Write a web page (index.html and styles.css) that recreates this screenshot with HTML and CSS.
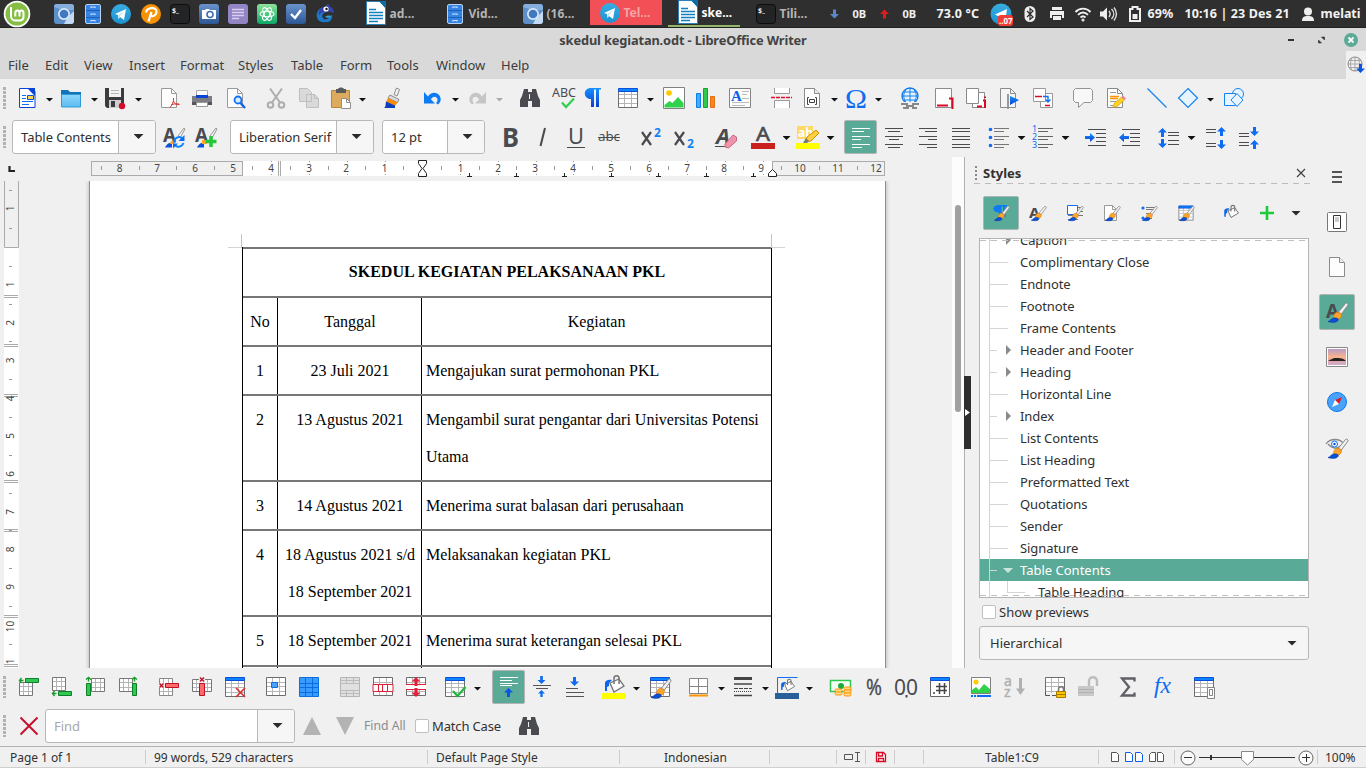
FILE: index.html
```html
<!DOCTYPE html>
<html lang="en">
<head>
<meta charset="utf-8">
<title>skedul kegiatan.odt - LibreOffice Writer</title>
<link rel="stylesheet" href="styles.css">
</head>
<body>
<svg class="paints" aria-hidden="true">
<defs>
<linearGradient id="gb" x1="0" y1="0" x2="0" y2="1"><stop offset="0" stop-color="#1592ff"/><stop offset="1" stop-color="#0a3fd0"/></linearGradient>
<linearGradient id="gf" x1="0" y1="0" x2="0" y2="1"><stop offset="0" stop-color="#8fd6fb"/><stop offset="1" stop-color="#5cbcf2"/></linearGradient>
<linearGradient id="gs" x1="0" y1="0" x2="0" y2="1"><stop offset="0" stop-color="#b79cc8"/><stop offset=".5" stop-color="#f9b48c"/><stop offset=".7" stop-color="#e9a0a0"/><stop offset="1" stop-color="#c8b0d0"/></linearGradient>
<linearGradient id="gt" x1="0" y1="0" x2="0" y2="1"><stop offset="0" stop-color="#38ade2"/><stop offset="1" stop-color="#1c93d1"/></linearGradient>
<linearGradient id="ga" x1="0" y1="0" x2="0" y2="1"><stop offset="0" stop-color="#8fe39a"/><stop offset="1" stop-color="#0ca767"/></linearGradient>
<linearGradient id="gk" x1="0" y1="0" x2="0" y2="1"><stop offset="0" stop-color="#6a93cc"/><stop offset="1" stop-color="#2c5795"/></linearGradient>
</defs>
</svg>
<svg class="symbols" aria-hidden="true">
<!-- shared pieces -->
<symbol id="brush" viewBox="0 0 24 24"><path d="M20.500 3.500L13.500 12l2.500 2.500 7-9.500c.5-1.500-1.500-2.500-2.500-1.500z" fill="#f0f0f0" stroke="#8a8a8a"/><path d="M13 12.500c-3-.5-4 2-4.500 5l5.500 1.500c2-1.500 3-3.500 2-5.500z" fill="#fda62b" stroke="#e08010" stroke-width=".8"/><path d="M3 21.500c2 0 3.500-3.500 6-3.500 3 0 5 .5 4 2.500-1.500 2.500-7.500 2-10 1z" fill="#0a50d8" stroke="#083aa5" stroke-width=".7"/></symbol>
<symbol id="grid" viewBox="0 0 24 24"><path d="M2.500 3.500h19v18h-19z" fill="#fff" stroke="#6d6d70"/><path d="M8.500 4v17M15.500 4v17M3 8.500h18M3 12.500h18M3 17.500h18" stroke="#b5b5b8"/></symbol>
<symbol id="table" viewBox="0 0 24 24"><use href="#grid"/><path d="M2.500 2.500h19v3h-19z" fill="#0d83ff" stroke="#0a50d8"/></symbol>
<symbol id="page" viewBox="0 0 24 24"><path d="M4.500 2.500h10l5 5v14h-15z" fill="#fdfdfd" stroke="#8b8b8b"/><path d="M14.500 2.500v5h5" fill="#eee" stroke="#8b8b8b"/></symbol>
<symbol id="pic" viewBox="0 0 24 24"><path d="M1.500 1.500h21v21h-21z" fill="#fff" stroke="#808080"/><circle cx="7" cy="7" r="2.800" fill="#ffc800"/><path d="M2.500 21.500v-2.500l5-4 3 2 5.500-6 5.500 6v4.500z" fill="#30d24a"/></symbol>
<symbol id="pour" viewBox="0 0 24 24"><path d="M8 9l9-4 5 7-10 6z" fill="#fff" stroke="#737373" stroke-width="1.300"/><path d="M12 10V4c0-3 5-3 5 0v6" fill="none" stroke="#737373" stroke-width="1.500"/><path d="M3 17V9c0-2 3-4 7-3l-3 3v3l-2 1v4z" fill="#0d63ea"/></symbol>
<symbol id="up" viewBox="0 0 9 9"><path d="M4.500 0L9 4.500H6V9H3V4.500H0z"/></symbol>
<symbol id="dn" viewBox="0 0 9 9"><path d="M4.500 9L9 4.500H6V0H3v4.500H0z"/></symbol>
<!-- standard bar -->
<symbol id="new" viewBox="0 0 24 24"><path d="M4.500 2.500H17l3 3v16H4.500z" fill="#fff" stroke="#0a44d6"/><path d="M12 2h8v8z" fill="#0a44d6"/><path d="M7 9.500h4M7 12.500h4M7 15.500h11M7 18.500h7" stroke="#0d70f5"/><path d="M12.500 9.500h6v4h-6z" fill="#ffd34a" stroke="#0a50d8"/></symbol>
<symbol id="folder" viewBox="0 0 24 24"><path d="M2 4h7l2 2h11v6H2z" fill="#1273b8"/><path d="M2.500 8.500h19v12.500h-19z" fill="url(#gf)" stroke="#2e9bd8"/></symbol>
<symbol id="save" viewBox="0 0 24 24"><path d="M2 2h19v20H4l-2-2z" fill="#3b3b3d"/><path d="M6 2h12v9H6z" fill="#f2f2f2"/><path d="M8 4.500h8M8 7.500h8" stroke="#b8b8b8"/><path d="M6 14h12v8H6z" fill="#cfcfcf"/><path d="M8 15h4v6H8z" fill="#3b3b3d"/><circle cx="19" cy="20" r="3.200" fill="#d90a28"/></symbol>
<symbol id="pdf" viewBox="0 0 24 24"><path d="M3.500 2.500h10l5 5v14h-15z" fill="#fdfdfd" stroke="#9a9a9a"/><path d="M13.500 2.500v5h5" fill="none" stroke="#9a9a9a"/><path d="M12 21.500c2-2 4-6 3.500-9.500M15.500 15c1 3 3 4 6 3.500M13 19c2-1 5-1.500 8-1" fill="none" stroke="#e03030"/></symbol>
<symbol id="print" viewBox="0 0 24 24"><path d="M2 10h20v9H2z" fill="#7d7e84"/><path d="M2 16h20v3H2z" fill="#55565c"/><path d="M6.500 4.500h11v6h-11z" fill="#fff" stroke="#aaa"/><path d="M6 9h12v3H6z" fill="#0a44d6"/><path d="M6.500 16.500h11v4h-11z" fill="#fff" stroke="#999"/></symbol>
<symbol id="preview" viewBox="0 0 24 24"><path d="M3.500 2.500h10l5 5v14h-15z" fill="#fdfdfd" stroke="#9a9a9a"/><path d="M13.500 2.500v5h5" fill="none" stroke="#9a9a9a"/><circle cx="14" cy="14" r="3.500" fill="#d8ecff" stroke="#0d70f5" stroke-width="1.800"/><path d="M16.500 17l4.500 5" stroke="#0a60e8" stroke-width="2.200"/></symbol>
<symbol id="cut" viewBox="0 0 24 24"><g fill="none" stroke="#adadad" stroke-width="2"><path d="M6 2.500l10 14M18 2.500l-10 14"/><circle cx="6.500" cy="19" r="2.800"/><circle cx="17.500" cy="19" r="2.800"/></g></symbol>
<symbol id="copy" viewBox="0 0 24 24"><path d="M2.500 2.500h8l4 4v9h-12zM9.500 8.500h8l4 4v9h-12z" fill="#dadada" stroke="#bebebe"/><path d="M17.500 8.500v4h4" fill="none" stroke="#bebebe"/></symbol>
<symbol id="paste" viewBox="0 0 24 24"><path d="M2.500 4.500h18v17h-18z" fill="#dcab5d" stroke="#b98838"/><path d="M7 3h2c1-2 5-2 6 0h2v4H7z" fill="#5a5a5c"/><path d="M12.500 12.500h5l4 4v6h-9z" fill="#fff" stroke="#8f8f8f"/><path d="M17.500 12.500v4h4" fill="none" stroke="#8f8f8f"/></symbol>
<symbol id="clone" viewBox="0 0 24 24"><path d="M16.500 2l3 1.500-2.500 6.500-3-1.500z" fill="#f4f4f4" stroke="#8a8a8a"/><path d="M10 9l9 4.500-1.500 3L8 12z" fill="#dcdcdc" stroke="#8a8a8a"/><path d="M8 12l9.500 4.500-2.500 3.500L6 16z" fill="#ff8c00"/><path d="M6 15.500l9 4v2.500H4c2-1 1.500-4 2-6.500z" fill="#0a3fc0"/></symbol>
<symbol id="undo" viewBox="0 0 24 24"><path d="M4 6v11.500h11L11 13.500c1.500-4 6-3.500 6.500 0 .2 1.500-.5 2.500-1.500 3.500l2 1.500c2.500-2 3.500-5 2-8C17.500 5.500 11 5.500 8 10.500z" fill="#0d7bf5"/></symbol>
<symbol id="redo" viewBox="0 0 24 24"><path d="M21 6v11.500H10l4-4c-1.500-4-6-3.500-6.500 0-.2 1.500.5 2.500 1.500 3.500l-2 1.500c-2.500-2-3.500-5-2-8C7.500 5.500 14 5.500 17 10.500z" fill="#c6c6c6"/></symbol>
<symbol id="find" viewBox="0 0 24 24"><path d="M6 3h4v3h4V3h4l2 7 2 4v7h-8v-6h-4v6H2v-7l2-4z" fill="#4a4b50"/><path d="M11.500 8v5" stroke="#f0f0f0"/></symbol>
<symbol id="abc" viewBox="0 0 24 24"><text x="0" y="10.500" font-size="12.500" textLength="24" lengthAdjust="spacingAndGlyphs" fill="#4a4b50">ABC</text><path d="M10 16.500l4 4.500 8-8.500" fill="none" stroke="#2fd04f" stroke-width="2.200"/></symbol>
<symbol id="pil" viewBox="0 0 24 24"><path d="M20 2v1.500h-2V21h-3V3.500h-2V21h-3v-8C2 13 1.500 2 10 2z" fill="url(#gb)"/></symbol>
<symbol id="chart" viewBox="0 0 24 24"><path d="M2.500 7.500h4v14h-4z" fill="#4aa8ff" stroke="#0a80ec"/><path d="M9.500 2.500h4v19h-4z" fill="#2fc94c" stroke="#18a038"/><path d="M16.500 10.500h4v11h-4z" fill="#ff8420" stroke="#e07014"/></symbol>
<symbol id="textbox" viewBox="0 0 24 24"><path d="M1.500 2.500h21v19h-21z" fill="#fdfdfd" stroke="#858585"/><text x="3" y="14.500" class="serif" font-size="15" font-weight="700" fill="#0a60e8">A</text><path d="M14 5.500h7M14 8.500h5M14 12.500h7M4 16.500h17M4 19.500h13" stroke="#bbb"/></symbol>
<symbol id="pbreak" viewBox="0 0 24 24"><path d="M4.500 2v5.500h15V2M4.500 22v-7.500h15V22" fill="#fff" stroke="#9a9a9a"/><path d="M1 11.500h21" stroke="#e01030" stroke-width="1.300" stroke-dasharray="4 1"/></symbol>
<symbol id="field" viewBox="0 0 24 24"><use href="#page"/><path d="M9 11.500H7.500v7H9M15 11.500h1.500v7H15M9.500 13.500h5v3h-5z" fill="none" stroke="#444"/></symbol>
<symbol id="omega" viewBox="0 0 24 24"><text x="1" y="21.500" font-size="28" class="serif" textLength="22" lengthAdjust="spacingAndGlyphs" fill="#0d6cf2">Ω</text></symbol>
<symbol id="link" viewBox="0 0 24 24"><circle cx="12" cy="10" r="8" fill="#e2f2ff" stroke="#0a78ea" stroke-width="1.300"/><path d="M12 2v16M4 10h16M5.500 6h13M5.500 14h13M8 3.500c-3 4-3 9 0 13M16 3.500c3 4 3 9 0 13" fill="none" stroke="#0a78ea" stroke-width=".9"/><path d="M2 16h20v6H2z" fill="#f0f0f0"/><path d="M3 18h7M14 18h7M8 20h8M5 22h6M14 22h5" stroke="#666" stroke-width="1.600"/></symbol>
<symbol id="foot" viewBox="0 0 24 24"><path d="M3.500 2.500h16v19h-16z" fill="#fdfdfd" stroke="#8b8b8b"/><path d="M5 19.500h11" stroke="#d90a28" stroke-width="2"/><path d="M17 12.500h3.500V23" fill="none" stroke="#d90a28" stroke-width="2"/></symbol>
<symbol id="endn" viewBox="0 0 24 24"><path d="M8.500 6.500h12v15h-12z" fill="#fff" stroke="#8b8b8b"/><path d="M2.500 2.500h12v15h-12z" fill="#fff" stroke="#8b8b8b"/><path d="M13 20.500h5" stroke="#d90a28" stroke-width="2"/><path d="M19 14.500h2V22M21 10.500v1.500" fill="none" stroke="#d90a28" stroke-width="2"/></symbol>
<symbol id="bm" viewBox="0 0 24 24"><path d="M2.500 2.500h10l5 5v14h-15z" fill="#f4f4f4" stroke="#8b8b8b"/><path d="M12.500 2.500v5h5" fill="none" stroke="#8b8b8b"/><path d="M10 8v15" stroke="#999" stroke-width="2"/><path d="M12 10l9 4-9 5z" fill="url(#gb)"/></symbol>
<symbol id="cross" viewBox="0 0 24 24"><path d="M9.500 7.500h12v14h-12z" fill="#fff" stroke="#999"/><path d="M2.500 2.500h12v13h-12z" fill="#fff" stroke="#999"/><path d="M4 10.500h7M14 19.500h5" stroke="#d90a28" stroke-width="1.600"/><path d="M12 10.500h5v5M14.500 13.500l2.500 2.500 2.500-2.500" fill="none" stroke="#0d70f5" stroke-width="1.400"/></symbol>
<symbol id="comment" viewBox="0 0 24 24"><path d="M4.500 2.500h15l2 2v10l-2 2H13L7.500 21.500v-5h-3l-2-2v-10z" fill="#f8f8f8" stroke="#949494"/></symbol>
<symbol id="track" viewBox="0 0 24 24"><path d="M2.500 2.500h10l5 5v14h-15z" fill="#fdfdfd" stroke="#8b8b8b"/><path d="M12.500 2.500v5h5" fill="none" stroke="#8b8b8b"/><path d="M5 6.500h6M5 15.500h6M5 19.500h3" stroke="#999"/><path d="M5 10.500h9M5 12.500h8" stroke="#ff9500" stroke-width="1.300"/><path d="M8 21.500l1-4 7.500-6.500 3 3-7.500 6.500z" fill="#ffd21f" stroke="#c89000" stroke-width=".6"/><path d="M16.500 11l1.500-1.500 3 3-1.500 1.500z" fill="#ee82a0"/></symbol>
<symbol id="line" viewBox="0 0 24 24"><path d="M2.500 2.500l19 19" stroke="#1583f2" stroke-width="1.300"/></symbol>
<symbol id="diamond" viewBox="0 0 24 24"><path d="M12 2.500l9.500 9.500-9.500 9.500L2.500 12z" fill="#e8f4ff" stroke="#1583f2" stroke-width="1.200"/></symbol>
<symbol id="shapes" viewBox="0 0 24 24"><circle cx="16" cy="8" r="5.500" fill="#e8f4ff" stroke="#1583f2"/><path d="M2.500 7.500h11v12h-11z" fill="#e8f4ff" stroke="#1583f2"/><path d="M15 7.500l6 6.500-6 6.500L9 14z" fill="#e8f4ff" stroke="#1583f2"/></symbol>
<!-- formatting bar -->
<symbol id="upd" viewBox="0 0 24 24"><text x="1" y="16.500" font-size="19" font-weight="700" textLength="13" lengthAdjust="spacingAndGlyphs" fill="#4a4b50">A</text><path d="M22 3l-6 8 2 2 5-9z" fill="#f5f5f5" stroke="#999"/><path d="M3 22.500c1-2 3-5 7-5v5z" fill="#0a50d8"/><path d="M9 16h3v3H8z" fill="#fda62b"/><path d="M20.500 14c-3-4-9-1-8 4M13 20c2 3 7 2 8.500-2" fill="none" stroke="#0d83ff" stroke-width="2"/><path d="M22.500 10v6h-6zM11 23.500v-5h5z" fill="#0a6cf0"/></symbol>
<symbol id="addst" viewBox="0 0 24 24"><text x="1" y="16.500" font-size="19" font-weight="700" textLength="13" lengthAdjust="spacingAndGlyphs" fill="#4a4b50">A</text><path d="M22 3l-6 8 2 2 5-9z" fill="#f5f5f5" stroke="#999"/><path d="M3 22.500c1-2 3-5 7-5v5z" fill="#0a50d8"/><path d="M8 15h5v4H8z" fill="#fda62b"/><path d="M17 11v11M11.500 16.500h11" stroke="#22c838" stroke-width="3.500"/></symbol>
<symbol id="bold" viewBox="0 0 24 24"><text x="4" y="21.500" font-size="26" font-weight="700" textLength="17" lengthAdjust="spacingAndGlyphs" fill="#4a4b50">B</text></symbol>
<symbol id="ital" viewBox="0 0 24 24"><path d="M15 3L10.500 21" stroke="#4a4b50" stroke-width="2"/></symbol>
<symbol id="und" viewBox="0 0 24 24"><text x="4" y="18.500" font-size="22" textLength="16" lengthAdjust="spacingAndGlyphs" fill="#4a4b50">U</text><path d="M3 22.500h18" stroke="#4a4b50"/></symbol>
<symbol id="strike" viewBox="0 0 24 24"><text x="1" y="16" font-size="13" textLength="22" lengthAdjust="spacingAndGlyphs" fill="#4a4b50">abc</text><path d="M1 12.500h22" stroke="#4a4b50"/></symbol>
<symbol id="sup" viewBox="0 0 24 24"><path d="M3 7l9 13M12 7l-9 13" stroke="#4a4b50" stroke-width="2.200"/><text x="15" y="11.500" font-size="12" font-weight="700" fill="#1080f8">2</text></symbol>
<symbol id="sub" viewBox="0 0 24 24"><path d="M3 7l9 13M12 7l-9 13" stroke="#4a4b50" stroke-width="2.200"/><text x="15" y="22.500" font-size="12" font-weight="700" fill="#1080f8">2</text></symbol>
<symbol id="clear" viewBox="0 0 24 24"><text x="2" y="19" font-size="22" font-weight="700" font-style="italic" textLength="14" lengthAdjust="spacingAndGlyphs" fill="#4a4b50">A</text><path d="M1 21.500h10" stroke="#4a4b50"/><path d="M11 19l8-9 3.500 2v4l-8 7-3.500-1z" fill="#f292aa" stroke="#c56a80"/></symbol>
<symbol id="fcol" viewBox="0 0 24 24"><text x="5" y="16" font-size="20" textLength="14" lengthAdjust="spacingAndGlyphs" fill="#4a4b50" stroke="#4a4b50" stroke-width=".6">A</text><path d="M0 18h24v6H0z" fill="#c9211e"/></symbol>
<symbol id="hcol" viewBox="0 0 24 24"><path d="M1 1h16v13H1z" fill="#ffd966"/><text x="2" y="11.500" font-size="12" font-weight="700" fill="#fff">ab</text><path d="M9 17l2-5 9-7 3 3-8 8z" fill="#ffcd40" stroke="#c99300"/><path d="M7 18l3-5 3 3-2 2z" fill="#7a7a72"/><path d="M0 18h24v6H0z" fill="#ff0"/></symbol>
<symbol id="al" viewBox="0 0 24 24"><path d="M3 3.500h18M3 6.500h12M3 11.500h18M3 14.500h9M3 19.500h18M3 22.500h10"/></symbol>
<symbol id="ac" viewBox="0 0 24 24"><path d="M3 3.500h18M6 6.500h12M3 11.500h18M7 14.500h10M3 19.500h18M6 22.500h12"/></symbol>
<symbol id="ar" viewBox="0 0 24 24"><path d="M3 3.500h18M9 6.500h12M3 11.500h18M12 14.500h9M3 19.500h18M11 22.500h10"/></symbol>
<symbol id="aj" viewBox="0 0 24 24"><path d="M3 3.500h18M3 6.500h18M3 11.500h18M3 14.500h18M3 19.500h18M3 22.500h18"/></symbol>
<symbol id="bul" viewBox="0 0 24 24"><g stroke="none" fill="#0d6cf2"><circle cx="3.500" cy="4.500" r="1.800"/><circle cx="3.500" cy="12.500" r="1.800"/><circle cx="3.500" cy="20.500" r="1.800"/></g><path stroke="#777" d="M7 3.500h15M7 6.500h10M7 11.500h15M7 14.500h10M7 19.500h15M7 22.500h10"/></symbol>
<symbol id="num" viewBox="0 0 24 24"><g stroke="none" fill="#0d6cf2" font-size="9"><text x="1" y="7">1</text><text x="1" y="15">2</text><text x="1" y="23">3</text></g><path stroke="#666" d="M7 3.500h15M7 6.500h10M7 11.500h15M7 14.500h10M7 19.500h15M7 22.500h10"/></symbol>
<symbol id="ind" viewBox="0 0 24 24"><path d="M4 4.500h18M12 8.500h10M12 12.500h10M12 16.500h10M4 20.500h18"/><path stroke="none" fill="url(#gb)" d="M1 11h5V8l5 4.500L6 17v-3H1z"/></symbol>
<symbol id="outd" viewBox="0 0 24 24"><path d="M4 4.500h18M12 8.500h10M12 12.500h10M12 16.500h10M4 20.500h18"/><path stroke="none" fill="url(#gb)" d="M11 11H6V8l-5 4.500L6 17v-3h5z"/></symbol>
<symbol id="lsp" viewBox="0 0 24 24"><g stroke="none" fill="#0d6cf2"><use href="#up" x="1" y="3" width="9" height="9"/><use href="#dn" x="1" y="14" width="9" height="9"/></g><path d="M11 7.500h11M11 10.500h11M11 15.500h11M11 19.500h11"/></symbol>
<symbol id="psi" viewBox="0 0 24 24"><path d="M2 4.500h10M2 7.500h10M2 18.500h10M2 21.500h10"/><g stroke="none" fill="#0d6cf2"><use href="#up" x="13" y="2" width="9" height="9"/><use href="#dn" x="13" y="15" width="9" height="9"/></g></symbol>
<symbol id="psd" viewBox="0 0 24 24"><path d="M2 8.500h10M2 11.500h10M2 17.500h10M2 20.500h10"/><g stroke="none" fill="#0d6cf2"><use href="#dn" x="13" y="2" width="9" height="9"/><use href="#up" x="13" y="15" width="9" height="9"/></g></symbol>
<!-- table bar -->
<symbol id="g3" viewBox="0 0 14 14"><path d="M.5.500h13v13H.5z" fill="#fff" stroke="#777"/><path d="M4.500 1v12M9.500 1v12M1 4.500h12M1 9.500h12" stroke="#b5b5b8"/></symbol>
<symbol id="rowa" viewBox="0 0 24 24"><use href="#g3" x="2" y="7" width="14" height="14"/><path d="M8.500 3.500h13v4h-13z" fill="#30c850" stroke="#0c8028"/><path d="M6.500 5.500h-4M4.500 3l-2 2.500 2 2.500" fill="none" stroke="#1a9a30" stroke-width="1.400"/></symbol>
<symbol id="rowb" viewBox="0 0 24 24"><use href="#g3" x="2" y="2" width="14" height="14"/><path d="M8.500 16.500h13v4h-13z" fill="#30c850" stroke="#0c8028"/><path d="M6.500 18.500h-4M4.500 16l-2 2.500 2 2.500" fill="none" stroke="#1a9a30" stroke-width="1.400"/></symbol>
<symbol id="coll" viewBox="0 0 24 24"><use href="#g3" x="8" y="3" width="14" height="14"/><path d="M3.500 8.500h4v12h-4z" fill="#30c850" stroke="#0c8028"/><path d="M5.500 6.500v-4M3 4.500l2.500-2 2.500 2" fill="none" stroke="#1a9a30" stroke-width="1.400"/></symbol>
<symbol id="colr" viewBox="0 0 24 24"><use href="#g3" x="3" y="3" width="14" height="14"/><path d="M16.500 8.500h4v12h-4z" fill="#30c850" stroke="#0c8028"/><path d="M18.500 6.500v-4M16 4.500l2.500-2 2.500 2" fill="none" stroke="#1a9a30" stroke-width="1.400"/></symbol>
<symbol id="delr" viewBox="0 0 24 24"><path d="M2.500 3.500h13v17h-13z" fill="#fff" stroke="#888"/><path d="M6.500 4v16M11.500 4v16M3 8.500h12M3 12.500h12M3 16.500h12" stroke="#b5b5b8"/><path d="M2 8h7v5H2z" fill="#f0f0f0"/><path d="M8.500 8.500h13v4h-13z" fill="#ff6a6a" stroke="#c01024"/><path d="M2.500 8.500l4 4m0-4l-4 4" stroke="#c01024" stroke-width="1.500"/></symbol>
<symbol id="delc" viewBox="0 0 24 24"><path d="M2.500 4.500h19v12h-19z" fill="#fff" stroke="#777"/><path d="M3 8.500h18M3 12.500h18M6.500 5v11M17.500 5v11" stroke="#b5b5b8"/><path d="M9 1h6v7H9z" fill="#f0f0f0"/><path d="M9.500 8.500h5v12h-5z" fill="#ff6a6a" stroke="#c01024"/><path d="M10 2.500l4 4m0-4l-4 4" stroke="#c01024" stroke-width="1.500"/></symbol>
<symbol id="delt" viewBox="0 0 24 24"><use href="#table"/><path d="M13 13l9 9m0-9l-9 9" stroke="#e23030" stroke-width="1.700"/></symbol>
<symbol id="selc" viewBox="0 0 24 24"><use href="#grid" y="-1"/><path d="M7.500 7.500h6v5h-6z" fill="#4aa4ff" stroke="#0a70e0"/></symbol>
<symbol id="selt" viewBox="0 0 24 24"><path d="M2.500 2.500h19v19h-19z" fill="#3a9bff" stroke="#0a70e0"/><path d="M8.500 3v18M15.500 3v18M3 8.500h18M3 12.500h18M3 17.500h18" stroke="#0a6ce0"/></symbol>
<symbol id="merge" viewBox="0 0 24 24"><path d="M2.500 2.500h19v19h-19z" fill="#e0e0e0" stroke="#b5b5b5"/><path d="M8.500 3v5M15.500 3v5M3 8.500h18M3 5.500h18M3 15.500h18M3 18.500h18M8.500 16v5M15.500 16v5" stroke="#bbb"/></symbol>
<symbol id="split" viewBox="0 0 24 24"><use href="#grid" y="-1"/><path d="M2 9.500h20v7H2zM7.500 10v7M11.500 10v7M16.500 10v7" fill="#fff" stroke="#e02038"/></symbol>
<symbol id="splt" viewBox="0 0 24 24"><use href="#grid" y="-1"/><path d="M2 10h20v4H2z" fill="#fff"/><path d="M2 9.500h20M2 14.500h20" stroke="#e02038"/><g fill="#e02038"><use href="#up" x="7.500" y="2" width="9" height="9"/><use href="#dn" x="7.500" y="13" width="9" height="9"/></g></symbol>
<symbol id="opt" viewBox="0 0 24 24"><use href="#table"/><path d="M10 16l4.500 5 8-9" fill="none" stroke="#28b840" stroke-width="2.400"/></symbol>
<symbol id="vt" viewBox="0 0 24 24"><path d="M3 2.500h18M3 5.500h12M3 8.500h18M3 10.500h12" stroke="#fff"/><use href="#up" x="7" y="13" width="9" height="9" fill="#0a55e8"/></symbol>
<symbol id="vc" viewBox="0 0 24 24"><path d="M3 10.500h18M6 13.500h12" stroke="#555"/><g fill="#0d6cf2"><use href="#dn" x="7" y="1" width="9" height="8"/><use href="#up" x="7" y="15" width="9" height="7"/></g></symbol>
<symbol id="vb" viewBox="0 0 24 24"><path d="M3 13.500h12M3 17.500h18M3 21.500h18" stroke="#555"/><use href="#dn" x="7" y="2" width="9" height="9" fill="#0d6cf2"/></symbol>
<symbol id="bg" viewBox="0 0 24 24"><use href="#pour" y="-1"/><path d="M0 18h24v6H0z" fill="#ff0"/></symbol>
<symbol id="auto" viewBox="0 0 24 24"><use href="#table"/><use href="#brush" y="1"/></symbol>
<symbol id="brd" viewBox="0 0 24 24"><path d="M3.500 3.500h18v15h-18zM12.500 3v15M3 11.500h18" fill="#fff" stroke="#858585"/><path d="M3 20.500h19" stroke="#ff9500" stroke-width="2"/></symbol>
<symbol id="lst" viewBox="0 0 24 24"><path d="M3 3.500h18" stroke="#444" stroke-width="3"/><path d="M3 9h18M3 20.500h18" stroke="#444" stroke-width="1.600"/><path d="M3 13.500h18" stroke="#444" stroke-dasharray="4 1"/><path d="M3 16.500h18" stroke="#444" stroke-dasharray="1 1"/></symbol>
<symbol id="lcol" viewBox="0 0 24 24"><path d="M2.500 18V2.500h20" fill="none" stroke="#0d70f5"/><use href="#pour" x="3" y="3" width="19" height="17"/><path d="M0 18h24v6H0z" fill="#2a6099"/></symbol>
<symbol id="cur" viewBox="0 0 24 24"><path d="M1.500 5.500h20v11h-20z" fill="#f4fff4" stroke="#30c850" stroke-width="1.500"/><circle cx="12" cy="11" r="3" fill="#20a838"/><g fill="#ffd98a" stroke="#ff9500"><rect x="6" y="14" width="7" height="3" rx="1.500"/><rect x="6" y="17" width="7" height="3" rx="1.500"/><rect x="15" y="12" width="7" height="3" rx="1.500"/><rect x="15" y="15" width="7" height="3" rx="1.500"/><rect x="15" y="18" width="7" height="3" rx="1.500"/></g></symbol>
<symbol id="pct" viewBox="0 0 24 24"><text x="4" y="20" font-size="22" textLength="16" lengthAdjust="spacingAndGlyphs" fill="#4a4b50" stroke="#4a4b50" stroke-width=".3">%</text></symbol>
<symbol id="dec" viewBox="0 0 24 24"><text x="0" y="19.500" font-size="21" textLength="24" lengthAdjust="spacingAndGlyphs" fill="#4a4b50">00</text><path d="M12.500 20v2.500" stroke="#4a4b50" stroke-width="2"/></symbol>
<symbol id="nfm" viewBox="0 0 24 24"><path d="M2.500 5.500h19v16h-19z" fill="#fff" stroke="#666"/><path d="M2.500 2.500h19v3h-19z" fill="#0d83ff" stroke="#0a50d8"/><path d="M8 11.500h11M8 15.500h11M11.500 8v11M16.500 8v11M5 18h2" stroke="#444" stroke-width="1.500"/></symbol>
<symbol id="cap" viewBox="0 0 24 24"><path d="M2.500 2.500h19v16h-19z" fill="#fff" stroke="#808080"/><circle cx="7" cy="7" r="2.500" fill="#ffc800"/><path d="M3 18v-3l4-3 3 3 5-6 6 5v4z" fill="#30d24a"/><path d="M2 21h2M5 21h2M8 21h14" stroke="#0d6cf2" stroke-width="2"/></symbol>
<symbol id="sort" viewBox="0 0 24 24"><g fill="#b0b0b0" font-size="14" stroke="#b0b0b0" stroke-width=".4"><text x="2" y="11">a</text><text x="2" y="21.500">z</text></g><path d="M18.500 3v12" stroke="#b0b0b0" stroke-width="3"/><path d="M14 13.500h9L18.500 20z" fill="#b0b0b0"/></symbol>
<symbol id="prot" viewBox="0 0 24 24"><use href="#grid" y="-1"/><path d="M2 18h11v4H2z" fill="#f0f0f0"/><path d="M2.500 17v3.500H7m2 0h4" fill="none" stroke="#555"/><path d="M15.500 16v-2c0-3 5-3 5 0v2" fill="none" stroke="#777" stroke-width="1.500"/><path d="M13.500 16.500h9v6h-9z" fill="#ffc400" stroke="#a67c00"/><path d="M14 19.500h8" stroke="#a67c00"/></symbol>
<symbol id="unpr" viewBox="0 0 24 24"><path d="M13 11V6c0-5 8-5 8 0v5" fill="none" stroke="#bcbcbc" stroke-width="2.400"/><path d="M2 11h16v10H2z" fill="#c8c8c8"/><path d="M2 14.500h16M2 17.500h16" stroke="#b0b0b0"/></symbol>
<symbol id="sum" viewBox="0 0 24 24"><path d="M18.500 6.500V3.500H6L13 12l-7 8.500h12.500v-3" fill="none" stroke="#5f6065" stroke-width="2.300"/></symbol>
<symbol id="fx" viewBox="0 0 24 24"><text x="4" y="18" class="serif" font-style="italic" font-size="24" textLength="17" lengthAdjust="spacingAndGlyphs" fill="#0d6cf2">fx</text></symbol>
<symbol id="tprop" viewBox="0 0 24 24"><use href="#table"/><path d="M15.500 12.500h7v11h-7zM17.500 14.500h3v6h-3z" fill="#fff" stroke="#858585"/></symbol>
<!-- small -->
<symbol id="s-frame" viewBox="0 0 18 18"><path d="M8 3.500h9M8 7.500h9M2 11.500h15M2 15.500h10" stroke="#777"/><path d="M1.500 1.500h10v9h-10z" fill="#fff" stroke="#0d70f5"/></symbol>
<symbol id="tg" viewBox="0 0 20 20"><circle cx="10" cy="10" r="10" fill="url(#gt)"/><path d="M4 10l11-5-2 11-4-3-1.500 2-.5-4z" fill="#fff"/><path d="M7.500 11L13 7l-4 5-1.500 3z" fill="#bfe0f2"/></symbol>
<symbol id="cab" viewBox="0 0 20 20"><rect x="2.500" y=".5" width="15" height="19" rx="1.500" fill="#3584e4" stroke="#b8d2f2"/><path d="M3 6.500h14M3 13.500h14" stroke="#1b5fb8"/><path d="M8 4V3h4v1M8 11v-1h4v1M8 17.500v-1h4v1" fill="none" stroke="#cfe2fb" stroke-width="1.200"/></symbol>
<symbol id="chro" viewBox="0 0 20 20"><rect width="20" height="20" rx="3" fill="#5d8fc9"/><path d="M0 3c0-2 1-3 3-3h14c2 0 3 1 3 3v3H9z" fill="#86aedd"/><path d="M12 16l4-5 4-4v10c0 2-1 3-3 3h-7z" fill="#c4daf2"/><circle cx="10" cy="10" r="6" fill="#d9e8f8"/><circle cx="10" cy="10" r="4.300" fill="#4079bf"/></symbol>
<symbol id="term" viewBox="0 0 20 20"><rect x=".5" y=".5" width="19" height="19" rx="3" fill="#232425" stroke="#0c0c0c"/><text x="2" y="8.500" font-size="7" font-weight="700" fill="#eee">$_</text></symbol>
<symbol id="odt" viewBox="0 0 20 24"><path d="M.5.500h13l6 6v17H.5z" fill="#fff" stroke="#2a7fb8"/><path d="M13 0h7v8z" fill="#0d6da8"/><path d="M3 8.500h7M3 11.500h14M3 14.500h14M3 17.500h14M3 20.500h9" stroke="#1180c0" stroke-width="1.400"/></symbol>
</svg>

<header class="panel">
  <svg class="mint" viewBox="0 0 28 28"><circle cx="14" cy="14" r="13.300" fill="#fff"/><circle cx="14" cy="14" r="11.500" fill="#86be43"/><path d="M8 7v9c0 3 2 4.500 4 4.500h4.500c2.500 0 4-1.500 4-4v-3.500c0-3.500-4-3.500-4 0v3.500m0-3.500c0-3.500-4.200-3.500-4.200 0v3.500" fill="none" stroke="#fff" stroke-width="2"/></svg>
  <svg class="app"><use href="#chro"/></svg>
  <svg class="app"><use href="#cab"/></svg>
  <svg class="app"><use href="#tg"/></svg>
  <svg class="app" viewBox="0 0 20 20"><circle cx="10" cy="10" r="10" fill="#f69204"/><path d="M7.500 17.500L10.500 8" stroke="#fff" stroke-width="2.400"/><path d="M5 8.500C6 3 16 2.500 15.500 8c-.3 4-5 5-6.500 3.500" fill="none" stroke="#fff" stroke-width="2.200"/></svg>
  <svg class="app"><use href="#term"/></svg>
  <svg class="app" viewBox="0 0 20 20"><rect width="20" height="20" rx="3" fill="url(#gk)"/><path d="M3 6h3l1-1h3l1 1h6v9H3z" fill="#fff"/><circle cx="11" cy="10.500" r="3" fill="#fff" stroke="#3a68a8" stroke-width="1.500"/></svg>
  <svg class="app" viewBox="0 0 20 20"><rect width="20" height="20" rx="3" fill="#9385c4"/><path d="M4 5.500h12M4 8.500h12M4 11.500h12M4 14.500h7" stroke="#d8d0ee" stroke-width="1.300"/></svg>
  <svg class="app" viewBox="0 0 20 20"><rect width="20" height="20" rx="3" fill="url(#ga)"/><g fill="none" stroke="#fff" stroke-width="1.100"><ellipse cx="10" cy="10" rx="7" ry="2.800"/><ellipse cx="10" cy="10" rx="7" ry="2.800" transform="rotate(60 10 10)"/><ellipse cx="10" cy="10" rx="7" ry="2.800" transform="rotate(120 10 10)"/></g></svg>
  <svg class="app" viewBox="0 0 20 20"><rect width="20" height="20" rx="3" fill="url(#gk)"/><path d="M5 10l4 4 6-8" fill="none" stroke="#fff" stroke-width="2.400"/></svg>
  <svg class="app" viewBox="0 0 20 20"><path d="M6 4l4-1 3-3 2 3c3 1 4 4 3 6-1-2-4-2-7-1-4 1-5 5-2 7 3 1 6-1 5-3l3-1c1 5-3 8-7 7C2 20-2 9 6 4z" fill="#1c78c8"/><path d="M6 4l4-1 3-3 2 3c3 1 4 4 3 6-2-2-5-2-8-1-3 0-5 1-6 4-1-3 0-6 2-8z" fill="#3a3fae"/><path d="M10 13c2-2 5-2 6 0l-3 1z" fill="#2aa6d8"/><circle cx="11" cy="5" r="2.600" fill="#fff"/><circle cx="11.500" cy="5" r="1.200" fill="#111"/></svg>
  <div class="task"><svg class="doc"><use href="#odt"/></svg>ad...</div>
  <div class="task"><svg class="app"><use href="#cab"/></svg>Vid...</div>
  <div class="task"><svg class="app"><use href="#chro"/></svg>(16...</div>
  <div class="task alert"><svg class="app"><use href="#tg"/></svg>Tel...</div>
  <div class="task active"><svg class="doc"><use href="#odt"/></svg>ske...</div>
  <div class="task"><svg class="app"><use href="#term"/></svg>Tili...</div>
  <svg class="net"><use href="#dn" fill="#5b86c8"/></svg><span class="small">0B</span>
  <svg class="net"><use href="#up" fill="#e01b1b"/></svg><span class="small">0B</span>
  <span class="temp">73.0 °C</span>
  <svg class="tray" viewBox="0 0 24 24"><circle cx="11" cy="12" r="10.500" fill="url(#gt)"/><path d="M5 12.500l12-5.500-1 7H8z" fill="#fff"/><rect x="8" y="13" width="15" height="11" rx="3" fill="#f23c34"/><text x="9" y="21.500" font-size="8" fill="#fff">..07</text></svg>
  <svg class="tray" viewBox="0 0 24 24"><rect x="6.500" y="4" width="11" height="16" rx="5.500" fill="#eee"/><path d="M9 9l6 6-3 2.500v-11l3 2.500-6 6" fill="none" stroke="#2f2f2f" stroke-width="1.200"/></svg>
  <svg class="tray" viewBox="0 0 24 24" fill="#eee"><path d="M7 5h10v3H7zM5 9h14v7h-2v-3H7v3H5zM8 14h8v4H8z"/></svg>
  <svg class="tray" viewBox="0 0 24 24" fill="none" stroke="#eee" stroke-width="1.900"><path d="M4.500 10c4-4.500 11-4.500 15 0M7 12.800c3-3 7-3 10 0M9.500 15.500c1.500-1.500 3.500-1.500 5 0"/><circle cx="12" cy="18" r=".6"/></svg>
  <svg class="tray" viewBox="0 0 24 24"><path d="M4 9.500h3l4-4v13l-4-4H4z" fill="#eee"/><path d="M13 9c1.500 2 1.500 4 0 6M15.500 7c3 3 3 7 0 10M18 5.500c3 4 3 9 0 13" fill="none" stroke="#ddd" stroke-width="1.400"/></svg>
  <svg class="tray" viewBox="0 0 24 24"><path d="M9.500 5h5v2H17v12H7V7h2.500z" fill="none" stroke="#eee" stroke-width="2"/><path d="M9.500 12h5v5h-5z" fill="#eee"/></svg>
  <span class="batt">69%</span><span class="clock">10:16 | 23 Des 21</span>
  <svg class="tray" viewBox="0 0 24 24" fill="#eee"><circle cx="12" cy="9.500" r="4"/><path d="M6 19c0-4 2-5 6-5s6 1 6 5z"/></svg>
  <span class="user">melati</span>
</header>

<div class="titlebar">
  <span class="wintitle">skedul kegiatan.odt - LibreOffice Writer</span>
  <svg class="winbtns" width="76" height="16" viewBox="0 0 76 16"><path d="M2 8h6" stroke="#333" stroke-width="2"/><path d="M35.500 5h3v3zM32.500 8v3h3z" fill="#333" stroke="#333" stroke-width=".6"/><circle cx="65" cy="8" r="7" fill="#5aaa98"/><path d="M62.500 5.500l5 5m0-5l-5 5" stroke="#fff" stroke-width="1.800"/></svg>
</div>
<nav class="menubar">
  <span>File</span><span>Edit</span><span>View</span><span>Insert</span><span>Format</span><span>Styles</span><span>Table</span><span>Form</span><span>Tools</span><span>Window</span><span>Help</span>
  <div class="update"><svg viewBox="0 0 20 28" width="20" height="28"><circle cx="9" cy="13" r="7" fill="none" stroke="#888"/><path d="M9 6v14M2 13h14M3 9.500h12M3 16.500h12M6 7c-2 4-2 8 0 12M12 7c2 4 2 8 0 12" fill="none" stroke="#999" stroke-width=".8"/><use href="#dn" x="10" y="13" width="9" height="9" fill="#0a55e8"/></svg></div>
</nav>

<div class="toolbar standard">
<i class="grip"></i>
<svg class="i"><use href="#new"/></svg><b class="a"></b><svg class="i"><use href="#folder"/></svg><b class="a"></b><svg class="i"><use href="#save"/></svg><b class="a"></b>
<svg class="i"><use href="#pdf"/></svg><svg class="i"><use href="#print"/></svg><svg class="i"><use href="#preview"/></svg>
<svg class="i"><use href="#cut"/></svg><svg class="i"><use href="#copy"/></svg><svg class="i"><use href="#paste"/></svg><b class="a"></b><svg class="i"><use href="#clone"/></svg>
<svg class="i"><use href="#undo"/></svg><b class="a"></b><svg class="i"><use href="#redo"/></svg><b class="a off"></b>
<svg class="i"><use href="#find"/></svg><svg class="i"><use href="#abc"/></svg><svg class="i"><use href="#pil"/></svg><svg class="i"><use href="#table"/></svg><b class="a"></b>
<svg class="i"><use href="#pic"/></svg><svg class="i"><use href="#chart"/></svg><svg class="i"><use href="#textbox"/></svg><svg class="i"><use href="#pbreak"/></svg><svg class="i"><use href="#field"/></svg><b class="a"></b><svg class="i"><use href="#omega"/></svg><b class="a"></b>
<svg class="i"><use href="#link"/></svg><svg class="i"><use href="#foot"/></svg><svg class="i"><use href="#endn"/></svg><svg class="i"><use href="#bm"/></svg><svg class="i"><use href="#cross"/></svg><svg class="i"><use href="#comment"/></svg><svg class="i"><use href="#track"/></svg>
<svg class="i"><use href="#line"/></svg><svg class="i"><use href="#diamond"/></svg><b class="a"></b><svg class="i"><use href="#shapes"/></svg>
</div>

<div class="toolbar formatting">
<i class="grip"></i>
<div class="combo wide"><span class="val">Table Contents</span><span class="drop"><b class="a big"></b></span></div>
<svg class="i"><use href="#upd"/></svg><svg class="i"><use href="#addst"/></svg>
<div class="combo wide"><span class="val">Liberation Serif</span><span class="drop"><b class="a big"></b></span></div>
<div class="combo size"><span class="val">12 pt</span><span class="drop"><b class="a big"></b></span></div>
<svg class="i"><use href="#bold"/></svg><svg class="i"><use href="#ital"/></svg><svg class="i"><use href="#und"/></svg><svg class="i"><use href="#strike"/></svg><svg class="i"><use href="#sup"/></svg><svg class="i"><use href="#sub"/></svg><svg class="i"><use href="#clear"/></svg>
<svg class="i"><use href="#fcol"/></svg><b class="a"></b><svg class="i"><use href="#hcol"/></svg><b class="a"></b>
<span class="toggled"><svg class="i ln w"><use href="#al"/></svg></span><svg class="i ln"><use href="#ac"/></svg><svg class="i ln"><use href="#ar"/></svg><svg class="i ln"><use href="#aj"/></svg>
<svg class="i ln"><use href="#bul"/></svg><b class="a"></b><svg class="i ln"><use href="#num"/></svg><b class="a"></b><svg class="i ln"><use href="#ind"/></svg><svg class="i ln"><use href="#outd"/></svg>
<svg class="i ln"><use href="#lsp"/></svg><b class="a"></b><svg class="i ln"><use href="#psi"/></svg><svg class="i ln"><use href="#psd"/></svg>
</div>

<main class="work">
  <section class="canvas">
    <svg class="hruler" width="952" height="24" viewBox="0 157 952 24">
      <path d="M9.500 166v5H15" fill="none" stroke="#222" stroke-width="2.200"/>
      <rect x="91.500" y="161.500" width="793" height="14" fill="#f0f0f0" stroke="#ababab"/>
      <rect x="242" y="161" width="530" height="15" fill="#fff"/>
      <path d="M242.500 161v15M278.500 161v15M280.500 161v15M772.500 161v15" stroke="#ababab"/>
      <path d="M101.500 166v4M139.500 166v4M176.500 166v4M214.500 166v4M252.500 166v4M290.500 166v4M328.500 166v4M365.500 166v4M403.500 166v4M441.500 166v4M479.500 166v4M516.500 166v4M554.500 166v4M592.500 166v4M630.500 166v4M668.500 166v4M706.500 166v4M743.500 166v4M781.500 166v4M819.500 166v4M857.500 166v4" stroke="#999"/>
      <path d="M271 161.500h1m37 0h1m37 0h1m37 0h1m74 0h1m37 0h1m37 0h1m36 0h1m37 0h1m37 0h1m37 0h1m37 0h1m37 0h1M271 174.500h1m37 0h1m37 0h1m37 0h1m74 0h1m37 0h1m37 0h1m36 0h1m37 0h1m37 0h1m37 0h1m37 0h1m37 0h1" stroke="#999"/>
      <path d="M467 176.500h5M469.500 173v3M514 176.500h5M516.500 173v3M562 176.500h5M564.500 173v3M609 176.500h5M611.500 173v3M656 176.500h5M658.500 173v3M704 176.500h5M706.500 173v3M751 176.500h5M753.500 173v3" stroke="#222"/>
      <path d="M418.500 160.500h8v3l-3.500 5 3.500 5v3h-8v-3l3.500-5-3.500-5z" fill="#fff" stroke="#222"/>
      <path d="M768.500 176.500v-3l4-4 4 4v3z" fill="#fff" stroke="#222"/>
      <g class="rnum"><text x="119.500" y="172">8</text><text x="157" y="172">7</text><text x="195" y="172">6</text><text x="233" y="172">5</text><text x="271" y="172">4</text><text x="309" y="172">3</text><text x="346" y="172">2</text><text x="384.500" y="172">1</text><text x="460.500" y="172">1</text><text x="498" y="172">2</text><text x="535" y="172">3</text><text x="573" y="172">4</text><text x="611" y="172">5</text><text x="649" y="172">6</text><text x="687" y="172">7</text><text x="724" y="172">8</text><text x="761" y="172">9</text><text x="800" y="172">10</text><text x="838" y="172">11</text><text x="876" y="172">12</text></g>
    </svg>
    <div class="docrow">
      <svg class="vruler" width="89" height="487" viewBox="0 181 89 487">
        <rect x="4" y="181" width="15" height="487" fill="#fff"/>
        <path d="M4.500 181v66.500h14V181" fill="#f0f0f0" stroke="#ababab"/>
        <path d="M4 295.500h14M4 297.500h14M4 344.500h14M4 346.500h14M4 394.500h14M4 396.500h14M4 480.500h14M4 482.500h14M4 529.500h14M4 531.500h14M4 615.500h14M4 617.500h14M4 664.500h14M4 666.500h14" stroke="#ababab"/>
        <path d="M9 190.500h3M9 228.500h3M9 266.500h3M9 304.500h3M9 341.500h3M9 379.500h3M9 417.500h3M9 455.500h3M9 493.500h3M9 530.500h3M9 568.500h3M9 606.500h3M9 644.500h3" stroke="#999"/>
        <g class="rnum"><text transform="translate(14 208.500) rotate(-90)">1</text><text transform="translate(14 284.500) rotate(-90)">1</text><text transform="translate(14 323) rotate(-90)">2</text><text transform="translate(14 360.500) rotate(-90)">3</text><text transform="translate(14 398.500) rotate(-90)">4</text><text transform="translate(14 436) rotate(-90)">5</text><text transform="translate(14 474) rotate(-90)">6</text><text transform="translate(14 512) rotate(-90)">7</text><text transform="translate(14 549.500) rotate(-90)">8</text><text transform="translate(14 587) rotate(-90)">9</text><text transform="translate(14 626.500) rotate(-90)">10</text><text transform="translate(14 661.500) rotate(-90)">1</text></g>
      </svg>
      <article class="sheet">
        <div class="marks"><i></i><i></i></div>
        <div class="dtable">
          <div class="head">SKEDUL KEGIATAN PELAKSANAAN PKL</div>
          <div class="r"><p>No</p><p>Tanggal</p><p class="mid">Kegiatan</p></div>
          <div class="r"><p>1</p><p>23 Juli 2021</p><p>Mengajukan surat permohonan PKL</p></div>
          <div class="r tall"><p>2</p><p>13 Agustus 2021</p><p>Mengambil surat pengantar dari Universitas Potensi<br>Utama</p></div>
          <div class="r"><p>3</p><p>14 Agustus 2021</p><p>Menerima surat balasan dari perusahaan</p></div>
          <div class="r tall"><p>4</p><p>18 Agustus 2021 s/d<br>18 September 2021</p><p>Melaksanakan kegiatan PKL</p></div>
          <div class="r"><p>5</p><p>18 September 2021</p><p>Menerima surat keterangan selesai PKL</p></div>
          <div class="r"><p></p><p></p><p></p></div>
        </div>
      </article>
    </div>
  </section>
  <div class="scroll"><i></i></div>
  <div class="splitter"><svg width="7" height="73" viewBox="0 0 7 73"><path fill="#2e2e2e" d="M0 0h7v73H0z"/><path d="M1 33l5 3.500L1 40z" fill="#fff"/></svg></div>
  <aside class="sidebar">
    <div class="shead"><i class="dots"></i><strong>Styles</strong><svg width="10" height="10" viewBox="0 0 10 10"><path d="M1 1l8 8M9 1L1 9" stroke="#444" stroke-width="1.200"/></svg></div>
    <div class="stools">
      <span class="tog"><svg class="s" viewBox="0 0 18 18"><path d="M15 1v1.500h-1.500V13H11V2.500H9.500V13H7V8.500C-.5 8.500-.5 1 7 1z" fill="#0d7bf5"/><use href="#brush" width="18" height="18"/></svg></span>
      <svg class="s" viewBox="0 0 18 18"><text x="0" y="13.500" font-size="15" font-weight="700" textLength="11" lengthAdjust="spacingAndGlyphs" fill="#4a4b50">A</text><use href="#brush" width="18" height="18"/></svg>
      <svg class="s" viewBox="0 0 18 18"><use href="#s-frame"/><use href="#brush" width="18" height="18"/></svg>
      <svg class="s" viewBox="0 0 18 18"><path d="M1.500 1.500h8l4 4v11h-12z" fill="#fff" stroke="#999"/><path d="M9.500 1.500v4h4" fill="none" stroke="#999"/><use href="#brush" width="18" height="18"/></svg>
      <svg class="s" viewBox="0 0 18 18"><path d="M6 3.500h10M6 5.500h8M6 9.500h6M6 14.500h6" stroke="#777"/><g fill="#0d6cf2"><circle cx="3" cy="4" r="1.600"/><circle cx="3" cy="14" r="1.600"/></g><use href="#brush" width="18" height="18"/></svg>
      <svg class="s" viewBox="0 0 18 18"><use href="#table" width="18" height="18"/><use href="#brush" width="18" height="18"/></svg>
      <svg class="s" viewBox="0 0 24 24"><use href="#pour"/></svg>
      <svg class="s" viewBox="0 0 18 18"><path d="M9 2v14M2 9h14" stroke="#1fc93c" stroke-width="2.600"/></svg>
      <b class="a big"></b>
    </div>
    <div class="list">
      <ul>
        <li class="ex">Caption</li><li>Complimentary Close</li><li>Endnote</li><li>Footnote</li><li>Frame Contents</li><li class="ex">Header and Footer</li><li class="ex">Heading</li><li>Horizontal Line</li><li class="ex">Index</li><li>List Contents</li><li>List Heading</li><li>Preformatted Text</li><li>Quotations</li><li>Sender</li><li>Signature</li><li class="sel">Table Contents</li><li class="child">Table Heading</li>
      </ul>
    </div>
    <label class="prev"><i class="check"></i>Show previews</label>
    <div class="hier">Hierarchical<b class="a big"></b></div>
  </aside>
  <div class="tabs">
    <svg class="i" viewBox="0 0 24 24"><path d="M7 7h10M7 12h10M7 17h10" stroke="#555" stroke-width="2"/></svg>
    <svg class="i" viewBox="0 0 24 24"><rect x="2.500" y="2.500" width="19" height="19" rx="1" fill="#fff" stroke="#777"/><path d="M8.500 5.500h7v13h-7z" fill="#fff" stroke="#333"/><path d="M10 7h4v5h-4z" fill="#ccc"/></svg>
    <svg class="i"><use href="#page"/></svg>
    <span class="tab"><svg class="i" viewBox="0 0 24 24"><text x="1" y="17.500" font-size="20" font-weight="700" textLength="13" lengthAdjust="spacingAndGlyphs" fill="#4a4b50">A</text><use href="#brush"/></svg></span>
    <svg class="i" viewBox="0 0 24 24"><path d="M1.500 2.500h21v19h-21z" fill="#fff" stroke="#888"/><path d="M3 4h18v16H3z" fill="url(#gs)"/><path d="M3 16c3-1 4-3 8-3s7 0 10 3z" fill="#222"/></svg>
    <svg class="i" viewBox="0 0 24 24"><circle cx="12" cy="12" r="9.500" fill="#4aa2fb" stroke="#0a78ea"/><path d="M17 7l-3 7-4-4z" fill="#e01b24"/><path d="M7 17l3-7 4 4z" fill="#fff"/></svg>
    <svg class="i" viewBox="0 0 24 24"><path d="M1 8c4-6 14-6 18 0M3 8c4 5 9 5 12 2" fill="none" stroke="#888" stroke-width="1.300"/><circle cx="9.500" cy="8" r="3" fill="#fff" stroke="#0d70f5"/><circle cx="9.500" cy="8" r="1.200" fill="#0a44d6"/><use href="#brush"/></svg>
  </div>
</main>

<div class="toolbar tablebar">
<i class="grip"></i>
<svg class="i"><use href="#rowa"/></svg><svg class="i"><use href="#rowb"/></svg><svg class="i"><use href="#coll"/></svg><svg class="i"><use href="#colr"/></svg><svg class="i"><use href="#delr"/></svg><svg class="i"><use href="#delc"/></svg><svg class="i"><use href="#delt"/></svg>
<svg class="i"><use href="#selc"/></svg><svg class="i"><use href="#selt"/></svg><svg class="i"><use href="#merge"/></svg><svg class="i"><use href="#split"/></svg><svg class="i"><use href="#splt"/></svg><svg class="i"><use href="#opt"/></svg><b class="a"></b>
<span class="toggled"><svg class="i"><use href="#vt"/></svg></span><svg class="i"><use href="#vc"/></svg><svg class="i"><use href="#vb"/></svg>
<svg class="i"><use href="#bg"/></svg><b class="a"></b><svg class="i"><use href="#auto"/></svg><svg class="i"><use href="#brd"/></svg><b class="a"></b><svg class="i"><use href="#lst"/></svg><b class="a"></b><svg class="i"><use href="#lcol"/></svg><b class="a"></b>
<svg class="i"><use href="#cur"/></svg><svg class="i"><use href="#pct"/></svg><svg class="i"><use href="#dec"/></svg><svg class="i"><use href="#nfm"/></svg><svg class="i"><use href="#cap"/></svg><svg class="i"><use href="#sort"/></svg><svg class="i"><use href="#prot"/></svg><svg class="i"><use href="#unpr"/></svg><svg class="i"><use href="#sum"/></svg><svg class="i"><use href="#fx"/></svg><svg class="i"><use href="#tprop"/></svg>
</div>

<div class="toolbar findbar">
  <i class="grip"></i>
  <svg class="i" viewBox="0 0 24 24"><path d="M3.500 3.500l17 17m0-17l-17 17" stroke="#c8102e" stroke-width="2"/></svg>
  <div class="combo search"><span class="val">Find</span><span class="drop"><b class="a big"></b></span></div>
  <svg class="i" viewBox="0 0 24 24"><path d="M12 3l9 18H3z" fill="#b3b3b3"/></svg>
  <svg class="i" viewBox="0 0 24 24"><path d="M12 21l9-18H3z" fill="#b3b3b3"/></svg>
  <span class="all">Find All</span><i class="check"></i><span class="mc">Match Case</span>
  <svg class="i"><use href="#find"/></svg>
</div>

<footer class="status">
  <span>Page 1 of 1</span><span>99 words, 529 characters</span><span>Default Page Style</span><span class="c">Indonesian</span><span></span>
  <span class="ic"><svg width="20" height="14" viewBox="0 0 20 14"><path d="M2.500 4.500h8v5h-8zM13 2.500h5M13 11.500h5M15.500 2.500v9" fill="none" stroke="#555"/></svg></span>
  <span class="ic"><svg width="12" height="12" viewBox="0 0 12 12"><path d="M1.500 1.500h7l2 2v7h-9zM3.500 2v3h4V2M3.500 10.500v-3h5v3" fill="#fff" stroke="#d90a28" stroke-width="1.300"/></svg></span>
  <span></span><span class="c">Table1:C9</span>
  <span class="ic"><svg width="56" height="14" viewBox="0 0 56 14"><path d="M1.500 2.500h5l2 2v7h-7z" fill="#fff" stroke="#555"/><path d="M15.500 2.500h5l2 2v7h-7zM25.500 2.500h5l2 2v7h-7z" fill="#fff" stroke="#0d5fe8"/><path d="M39.500 4.500l2-2h4v9h-6zM47.500 2.500h4l2 2v7h-6z" fill="#fff" stroke="#555"/></svg></span>
  <span class="ic"><svg width="134" height="16" viewBox="0 0 134 16"><g fill="#fafafa" stroke="#666"><circle cx="8" cy="8" r="7"/><circle cx="126" cy="8" r="7"/></g><path d="M4 7.500h8M122 7.500h8M126.500 4v8" stroke="#333"/><path d="M19 7.500h96" stroke="#333"/><path d="M31 5v5" stroke="#333" stroke-width="2"/><path d="M61.500 1.500h12v8L67.500 15l-6-5.500z" fill="#fff" stroke="#888"/></svg></span>
  <span class="zoom">100%</span>
</footer>
</body>
</html>
```
FILE: styles.css
```css
* { box-sizing: border-box; }
body {
  margin: 0; width: 1366px; height: 768px; overflow: hidden;
  display: grid; grid-template-rows: 28px 23px 28px 38px 40px 511px 39px 39px 22px;
  background: #f0f0f0; color: #303030;
  font: 13px/22px "Noto Sans", sans-serif;
}
svg { display: block; }
svg text { font-family: "Noto Sans", sans-serif; }
svg text.serif { font-family: "Liberation Serif", serif; }
.paints { position: absolute; width: 0; height: 0; }
.symbols { display: none; }
i { font-style: normal; }

.panel {
  display: grid; align-items: center; background: #2f2f2f; border-bottom: 1px solid #222;
  padding: 0 0 1px 3px; color: #f2f2f2; font-weight: 700; font-size: 12.5px; white-space: nowrap;
  grid-template-columns: 51px 28.500px 28.500px 29.500px 29px 29px 29px 29px 29px 29px 51px 79px 78px 67px 78px 88px 74px 23px 27px 23px 34px 53px 28px 27px 26px 25px 27px 25px 37px 111px 25px 44px;
}
.panel .mint { width: 28px; height: 28px; }
.panel .app { width: 20px; height: 20px; flex: none; }
.panel .doc { width: 20px; height: 24px; flex: none; margin-top: -2px; }
.task { display: flex; align-items: center; gap: 4px; height: 26px; font-size: 12px; color: #b4b4b4; padding-bottom: 1px; }
.task.alert { background: #f24f56; width: 72px; height: 25px; align-self: start; padding: 1px 0 0 10px; color: #f3a5a5; }
.task.active { width: 72px; padding: 1px 0 0 10px; height: 27px; align-self: start; border-bottom: 2px solid #93b66b; color: #fff; }
.net { width: 9px; height: 10px; }
.small { font-size: 11px; }
.tray { width: 24px; height: 24px; }
.temp { font-size: 12.500px; letter-spacing: .15px; }
.batt, .clock { font-size: 12.500px; letter-spacing: .1px; }

.titlebar { background: #d9d9d9; display: grid; grid-template-columns: 1fr auto 1fr; align-items: center; }
.wintitle { grid-column: 2; font-weight: 700; font-size: 12.800px; color: #434343; letter-spacing: -.13px; padding-top: 1px; }
.winbtns { justify-self: end; margin-right: 4px; }
.menubar {
  background: #d9d9d9; display: grid; align-items: center; padding-left: 8px; color: #3c3c3c;
  grid-template-columns: 37px 39px 45px 51px 58px 53px 49px 47px 49px 65px 845px 20px;
}
.update { background: #f0f0f0; height: 28px; }

.toolbar { display: grid; align-items: center; justify-items: start; padding-left: 3px; }
.i { width: 24px; height: 24px; }
.ln { stroke: #4a4b50; }
.ln.w { stroke: #fff; }
.grip { width: 3px; height: 22px; background: repeating-linear-gradient(#b2b2b2 0 3px, transparent 3px 4px); }
.a { width: 8px; height: 4px; background: #111; clip-path: polygon(0 0, 100% 0, 50% 100%); margin: 3px 0 0 .5px; }
.a.off { background: #aaa; }
.a.big { width: 10px; height: 5px; background: #2b2b2b; margin: 0; }
.standard { grid-template-columns: 12px 30px 14px 31px 13px 31px 24px 32px 34px 40px 33px 32px 29px 22px 40px 31px 14px 30px 23px 34px 29px 35px 30px 16px 32px 34px 42px 30px 30px 14px 30px 24px 34px 32px 34px 33px 40px 34px 40px 31px 30px 16px 24px; }
.formatting { padding-bottom: 1px; grid-template-columns: 9px 150px 32px 36px 152px 116px 32px 34px 33px 42px 33px 42px 37px 31px 14px 30px 18px 38px 34px 33px 38px 30px 14px 30px 23px 34px 39px 30px 17px 33px 24px; }
.combo { display: flex; height: 34px; border: 1px solid #b8b8b8; border-radius: 3px; background: #fff; white-space: nowrap; }
.combo .val { flex: 1; min-width: 0; padding-left: 8px; display: flex; align-items: center; letter-spacing: -.05px; }
.combo .drop { flex: none; width: 37px; border-left: 1px solid #b8b8b8; border-radius: 0 2px 2px 0; background: #f6f6f6; display: grid; place-items: center; padding-left: 3px; }
.combo.wide { width: 144px; }
.combo.size { width: 103px; }
.combo.search { width: 250px; }
.combo.search .val { color: #a8a8a8; }
.toggled { width: 33px; height: 34px; background: #5aaa98; border: 1px solid #b4b4b4; border-radius: 2px; display: grid; place-items: center; }

.work { display: grid; grid-template-columns: 952px 12px 10px 340px 52px; overflow: hidden; }
.canvas { display: grid; grid-template-rows: 24px 487px; overflow: hidden; }
.rnum { font-size: 10px; fill: #444; text-anchor: middle; }
.docrow { display: grid; grid-template-columns: 89px 798px; overflow: hidden; }
.sheet { background: #fff; border: solid #909090; border-width: 0 1px; width: 797px; padding: 53px 0 0 138px; box-shadow: 0 0 4px #aaa; }
.marks { display: flex; justify-content: space-between; width: 557px; height: 14px; }
.marks i { width: 14px; height: 14px; border-right: 1px solid #c4c4c4; border-bottom: 1px solid #d4d4d4; }
.marks i + i { border-right: 0; border-left: 1px solid #c4c4c4; }
.dtable { width: 530px; margin: -1px 0 0 14px; border: solid #000; border-width: 0 1px; font: 16px/37px "Liberation Serif", serif; color: #000; }
.head, .r { height: 49px; border-top: 2px solid #777; }
.head { text-align: center; font-weight: 700; padding-top: 4px; }
.r { display: grid; grid-template-columns: 34px 144px 1fr; }
.r.tall { height: 86px; }
.r:nth-last-child(2) { height: 50px; }
.r p { margin: 0; padding: 5px 4px 0; text-align: center; white-space: nowrap; }
.r p:nth-child(2) { padding-left: 5px; }
.r p + p { border-left: 1px solid #000; }
.r p:last-child { text-align: left; }
.r p.mid:last-child { text-align: center; }

.scroll { background: #fcfcfc; padding: 48px 0 0 3px; }
.scroll i { display: block; width: 6px; height: 207px; border-radius: 3px; background: #a0a0a0; }
.splitter { border-left: 1px solid #b0b0b0; padding-top: 219px; }
.splitter svg { margin-left: -1px; }
.sidebar { display: grid; grid-template-rows: 27px 54px 360px 28px 34px 8px; }
.shead { display: flex; align-items: center; padding: 5px 8px 0 1px; background: repeating-linear-gradient(90deg, #bcbcbc 0 6px, transparent 6px 11px) bottom/100% 1px no-repeat; }
.shead .dots { width: 2px; height: 14px; background: repeating-linear-gradient(#888 0 2px, transparent 2px 4px); }
.shead strong { flex: 1; padding-left: 6px; }
.stools { display: grid; grid-template-columns: 46px 37px 37px 37px 37px 45px 36px 33px 10px; padding: 4px 0 0 9px; align-items: center; }
.stools .s { width: 18px; height: 18px; }
.tog { width: 36px; height: 34px; background: #5aaa98; border: 1px solid #a9b8b4; border-radius: 2px; display: grid; place-items: center; }
.list { margin: 0 5px; border: 1px solid #b4b4b4; background: #fff; overflow: hidden; }
.list::before, .list::after { content: ""; display: block; height: 1px; background: repeating-linear-gradient(90deg, #c0c0c0 0 6px, transparent 6px 11px); position: relative; top: 1px; z-index: 1; }
.list::after { top: -8px; }
.list ul { list-style: none; margin: -11px 0 0; padding: 0; }
.list li { height: 22px; padding-left: 40px; letter-spacing: -.08px; background: linear-gradient(#d4d4d4, #d4d4d4) 9px 0/1px 100% no-repeat, linear-gradient(#d4d4d4, #d4d4d4) 10px 11px/18px 1px no-repeat; }
.list li.ex { background-size: 1px 100%, 7px 1px; }
.list li.ex::before, .list li.sel::before { content: ""; float: left; width: 5px; height: 10px; margin: 6px 0 0 -14px; background: #8a8a8a; clip-path: polygon(0 0, 100% 50%, 0 100%); }
.list li.sel { background-color: #5aaa98; color: #fff; letter-spacing: 0; background-size: 1px 100%, 7px 1px; }
.list li.sel::before { width: 10px; height: 5px; margin: 9px 0 0 -17px; background: #cbe5df; clip-path: polygon(0 0, 100% 0, 50% 100%); }
.list li.child { padding-left: 58px; background: linear-gradient(#d4d4d4, #d4d4d4) 9px 0/1px 100% no-repeat, linear-gradient(#d4d4d4, #d4d4d4) 27px 11px/18px 1px no-repeat, linear-gradient(#d4d4d4, #d4d4d4) 27px 0/1px 11px no-repeat; }
.check { display: inline-block; width: 14px; height: 14px; border: 1px solid #c0c0c0; border-radius: 2px; background: #fff; }
.prev { display: flex; align-items: center; gap: 3px; padding-left: 8px; }
.hier { margin: 0 5px; border: 1px solid #b8b8b8; border-radius: 3px; background: #f6f6f6; display: flex; align-items: center; justify-content: space-between; padding: 0 11px 0 10px; }
.tabs { display: grid; grid-template-rows: 40px 49px 42px 47px 43px 47px 45px; justify-items: center; align-items: center; justify-content: center; align-content: start; margin-left: -6px; }
.tab { width: 36px; height: 36px; display: grid; place-items: center; background: #5aaa98; border: 1px solid #b4b4b4; border-radius: 2px; }

.tablebar { padding-bottom: 1px; grid-template-columns: 14px 33px 33px 33px 41px 33px 33px 41px 33px 41px 33px 33px 39px 30px 19px 38px 33px 39px 30px 16px 38px 31px 14px 30px 14px 30px 24px 33px 32px 34px 41px 33px 41px 33px 40px 34px 42px 24px; }
.findbar { grid-template-columns: 14px 28px 255px 33px 31px 51px 17px 85px 24px; padding-bottom: 2px; white-space: nowrap; }
.findbar .all { color: #8c8c8c; font-size: 12.200px; }
.findbar .mc { letter-spacing: -.15px; }
.status {
  border-top: 1px solid #b2b2b2; border-bottom: 1px solid #cfcfcf; display: grid; align-items: center; font-size: 12px; white-space: nowrap;
  grid-template-columns: 146px 282px 192px 150px 67px 29px 29px 29px 175px 76px 143px 48px;
}
.status span { height: 14px; line-height: 15px; border-right: 1px solid #ccc; padding-left: 8px; letter-spacing: -.05px; }
.status span:first-child { padding-left: 10px; }
.status .c { text-align: center; padding: 0 0 0 2px; }
.status .ic { display: grid; place-items: center; padding: 0 0 0 2px; }
.status .zoom { border: 0; padding-left: 7px; }
```
